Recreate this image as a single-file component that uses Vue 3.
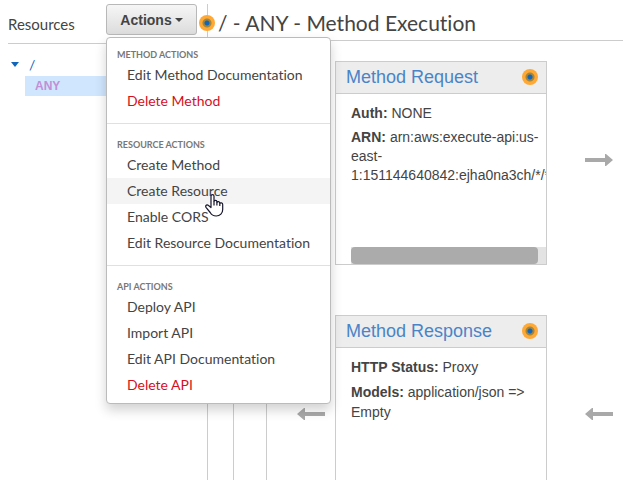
<script setup>
import { ref } from 'vue'

const groups = [
  { title: 'METHOD ACTIONS', items: [{ label: 'Edit Method Documentation' }, { label: 'Delete Method', danger: true }] },
  {
    title: 'RESOURCE ACTIONS',
    items: [{ label: 'Create Method' }, { label: 'Create Resource' }, { label: 'Enable CORS' }, { label: 'Edit Resource Documentation' }],
  },
  {
    title: 'API ACTIONS',
    items: [{ label: 'Deploy API' }, { label: 'Import API' }, { label: 'Edit API Documentation' }, { label: 'Delete API', danger: true }],
  },
]
const open = ref(true)
const active = ref('Create Resource')
</script>

<template>
  <div class="page">
    <aside class="sidebar">
      <div class="side-head">
        <span class="side-title">Resources</span>
        <div class="dropdown">
          <button class="actions" type="button" :aria-expanded="open" @click="open = !open">
            Actions<span class="caret"></span>
          </button>
          <div v-if="open" class="menu">
            <section v-for="g in groups" :key="g.title" class="group">
              <h3>{{ g.title }}</h3>
              <a
                v-for="i in g.items"
                :key="i.label"
                href="#"
                :class="{ danger: i.danger, active: active === i.label }"
                @mouseenter="active = i.label"
              >{{ i.label }}</a>
            </section>
            <svg class="pointer" width="20" height="25" viewBox="0 0 20 25" aria-hidden="true">
              <path
                d="M6 14.500V3.200c0-2.200 3-2.200 3 0v5.300c.2-1.600 2.900-1.400 2.900.3v.7c.3-1.400 2.900-1.100 2.900.5v.6c.4-1.200 2.900-.9 2.900.8v5c0 3.700-2.600 6.600-6.500 6.600-3.200 0-4.700-1.200-6-3.500L1 14.300c-1-2 1.100-3.200 2.500-1.800z"
                fill="#fff" stroke="#15152b" stroke-width="1.2" stroke-linejoin="round"
              />
              <path d="M9 8.500v4M11.900 9.500v3M14.800 10.500v2.500" fill="none" stroke="#15152b" stroke-width="1.2" />
            </svg>
          </div>
        </div>
      </div>
      <nav class="tree">
        <a class="root" href="#"><span class="toggle"></span>/</a>
        <a class="method" href="#">ANY</a>
      </nav>
    </aside>

    <main class="main">
      <span class="hint hint-edge"></span>
      <h1>/ - ANY - Method Execution</h1>
      <div class="flow">
        <div class="client"></div>
        <div class="lane">
          <div class="link"></div>
          <section class="card">
            <header><a href="#">Method Request</a><span class="hint"></span></header>
            <div class="body">
              <p><b>Auth:</b> NONE</p>
              <p class="arn"><b>ARN:</b> arn:aws:execute-api:us-<br />east-<br />1:151144640842:ejha0na3ch/*/*</p>
              <div class="track"><div class="thumb"></div></div>
            </div>
          </section>
          <div class="link out">
            <svg width="28" height="12" viewBox="0 0 28 12" aria-hidden="true"><path d="M0 4h20V0h1l7 6-7 6h-1V8H0z" fill="#a9a9a9" /></svg>
          </div>
        </div>
        <div class="lane">
          <div class="link in">
            <svg width="28" height="12" viewBox="0 0 28 12" aria-hidden="true"><path d="M28 4H8V0H7L0 6l7 6h1V8h20z" fill="#a9a9a9" /></svg>
          </div>
          <section class="card">
            <header><a href="#">Method Response</a><span class="hint"></span></header>
            <div class="body">
              <p><b>HTTP Status:</b> Proxy</p>
              <p><b>Models:</b> application/json =&gt; Empty</p>
            </div>
          </section>
          <div class="link out">
            <svg width="28" height="12" viewBox="0 0 28 12" aria-hidden="true"><path d="M28 4H8V0H7L0 6l7 6h1V8h20z" fill="#a9a9a9" /></svg>
          </div>
        </div>
      </div>
    </main>
  </div>
</template>

<style>
body {
  background: #fff;
  overflow: hidden;
}
</style>

<style scoped>
* {
  box-sizing: border-box;
}
.page {
  display: grid;
  grid-template-columns: 207px minmax(0, 1fr);
  height: 100vh;
  padding-top: 4px;
  overflow: hidden;
  color: #444;
  font: 14px/20px Lato, sans-serif;
  font-variant-ligatures: none;
}
a {
  color: inherit;
  text-decoration: none;
}
.sidebar {
  padding-left: 8px;
}
.side-head {
  display: flex;
  justify-content: space-between;
  align-items: flex-start;
  height: 40px;
  padding-right: 10px;
  border-bottom: 1px solid #ccc;
}
.side-title {
  padding-top: 10px;
  font-size: 15px;
}
.dropdown {
  position: relative;
}
.actions {
  display: flex;
  align-items: center;
  justify-content: center;
  gap: 3px;
  width: 91px;
  height: 31px;
  padding: 0;
  border: 1px solid #b8b8b8;
  border-radius: 3px;
  background: linear-gradient(#f6f6f6, #dcdcdc);
  color: #444;
  font: bold 14px/20px "Liberation Sans", Arial, sans-serif;
}
.caret {
  border: 4px solid transparent;
  border-top-color: #444;
  border-bottom: 0;
}
.menu {
  position: absolute;
  z-index: 5;
  top: 33px;
  left: 0;
  width: 225px;
  padding: 5px 0;
  border: 1px solid #bbb;
  border-radius: 4px;
  background: #fff;
  box-shadow: 0 6px 12px rgba(0, 0, 0, 0.18);
  white-space: nowrap;
}
.group + .group {
  margin-top: 9px;
  padding-top: 9px;
  border-top: 1px solid #e0e0e0;
}
.group h3 {
  margin: 0;
  padding: 4px 10px 0;
  color: #777;
  font-size: 9px;
  font-weight: 700;
  line-height: 15px;
}
.group a {
  display: block;
  padding: 3px 20px;
}
.group a.danger {
  color: #d5101c;
}
.group a.active {
  background: #f4f4f4;
}
.pointer {
  position: absolute;
  top: 155px;
  left: 98px;
}
.tree {
  padding-top: 9px;
}
.root {
  display: flex;
  align-items: center;
  gap: 10px;
  padding-left: 3px;
  height: 23px;
  color: #1166bb;
}
.toggle {
  border: 4px solid transparent;
  border-top: 5px solid #1166bb;
  border-bottom: 0;
}
.method {
  display: block;
  margin-left: 17px;
  padding-left: 10px;
  background: #d0e6ff;
  color: #c28fd6;
  font: bold 12px/20px "Liberation Sans", Arial, sans-serif;
}
.main {
  position: relative;
  display: flex;
  flex-direction: column;
  border-left: 1px solid #ccc;
}
.hint {
  width: 16px;
  height: 16px;
  border-radius: 50%;
  background: radial-gradient(circle, #1166bb 2px, #a58538 3px, #a58538 4px, #ffa834 5px);
}
.hint-edge {
  position: absolute;
  top: 11px;
  left: -9px;
}
h1 {
  margin: 0 0 0 8px;
  padding: 6px 2px 4px;
  border-bottom: 1px solid #ccc;
  font-size: 21px;
  font-weight: 400;
  line-height: 26px;
  white-space: nowrap;
}
.flow {
  flex: 1;
  display: grid;
  grid-template-columns: 34px minmax(0, 1fr);
  grid-template-rows: 204px 204px;
  row-gap: 50px;
  padding: 20px 0 0 25px;
}
.client {
  grid-row: 1 / 3;
  border: 1px solid #ccc;
}
.lane {
  display: grid;
  grid-template-columns: 68px minmax(0, 212px) minmax(0, 1fr);
}
.link {
  padding-top: 93px;
}
.link svg {
  display: block;
}
.in {
  padding-left: 30px;
}
.out {
  padding-left: 38px;
}
.card {
  display: flex;
  flex-direction: column;
  border: 1px solid #ccc;
  font-family: "Liberation Sans", Arial, sans-serif;
}
.card header {
  display: flex;
  align-items: center;
  justify-content: space-between;
  height: 32px;
  padding: 0 8px 2px 10px;
  border-bottom: 1px solid #ccc;
  background: #ededed;
  color: #4a84c8;
  font-size: 18px;
}
.body {
  flex: 1;
  display: flex;
  flex-direction: column;
  padding: 9px 0 0 15px;
  overflow: hidden;
}
.body p {
  margin: 0 0 5px;
}
.body .arn {
  line-height: 19px;
  white-space: nowrap;
}
.track {
  margin-top: auto;
  background: #e3e3e3;
}
.thumb {
  width: 96%;
  height: 17px;
  border-radius: 4px;
  background: #ababab;
}
</style>
